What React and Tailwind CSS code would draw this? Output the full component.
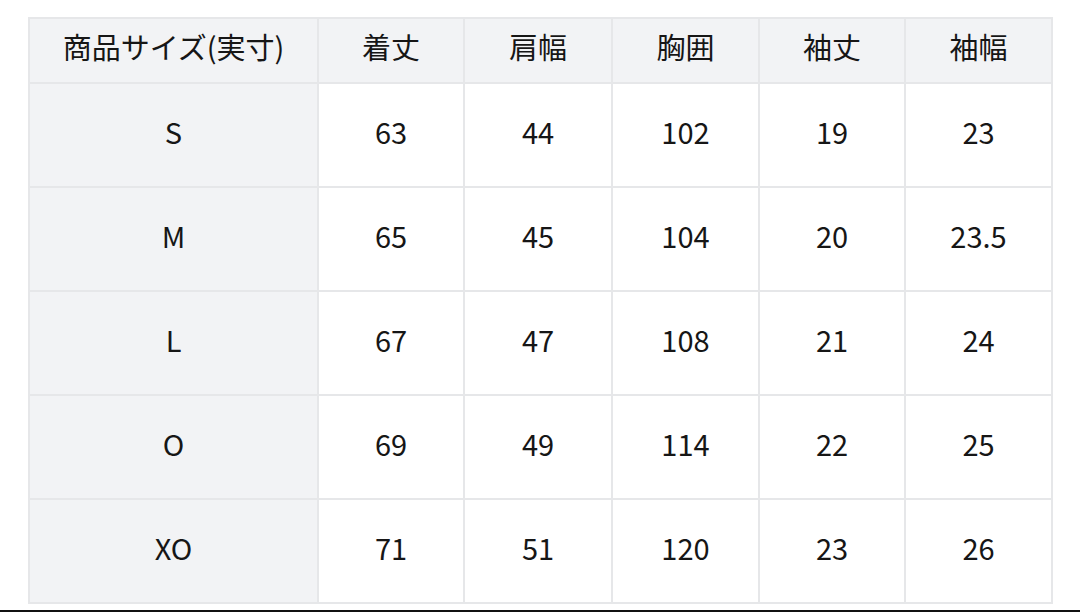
import React from 'react';

const HEADERS = ['商品サイズ(実寸)', '着丈', '肩幅', '胸囲', '袖丈', '袖幅'];

const ROWS = [
  ['S', '63', '44', '102', '19', '23'],
  ['M', '65', '45', '104', '20', '23.5'],
  ['L', '67', '47', '108', '21', '24'],
  ['O', '69', '49', '114', '22', '25'],
  ['XO', '71', '51', '120', '23', '26'],
];

const FONT = { fontFamily: '"Noto Sans CJK JP", "Noto Sans", sans-serif' };

export default function App() {
  return (
    <div className="w-[1080px] h-[612px] bg-white flex flex-col overflow-hidden" style={FONT}>
      <div className="pt-[17px] pl-[28px]">
        <table className="border-collapse text-[#161616] text-[29px] leading-none">
          <colgroup>
            <col className="w-[289px]" />
            <col className="w-[146px]" />
            <col className="w-[148px]" />
            <col className="w-[147px]" />
            <col className="w-[146px]" />
            <col className="w-[147px]" />
          </colgroup>
          <thead>
            <tr className="h-[65px]">
              {HEADERS.map((h) => (
                <th
                  key={h}
                  className="border-2 border-[#e6e7e9] bg-[#f2f3f5] font-normal text-center align-middle pb-[8px]"
                >
                  {h}
                </th>
              ))}
            </tr>
          </thead>
          <tbody>
            {ROWS.map((row) => (
              <tr key={row[0]} className="h-[104px]">
                {row.map((cell, i) => (
                  <td
                    key={i}
                    className={`border-2 border-[#e6e7e9] font-normal text-center align-middle pb-[7px] ${
                      i === 0 ? 'bg-[#f2f3f5]' : 'bg-white'
                    }`}
                  >
                    {cell}
                  </td>
                ))}
              </tr>
            ))}
          </tbody>
        </table>
      </div>
      <div className="flex-1" />
      <div className="h-[2px] bg-[#111111]" />
    </div>
  );
}
